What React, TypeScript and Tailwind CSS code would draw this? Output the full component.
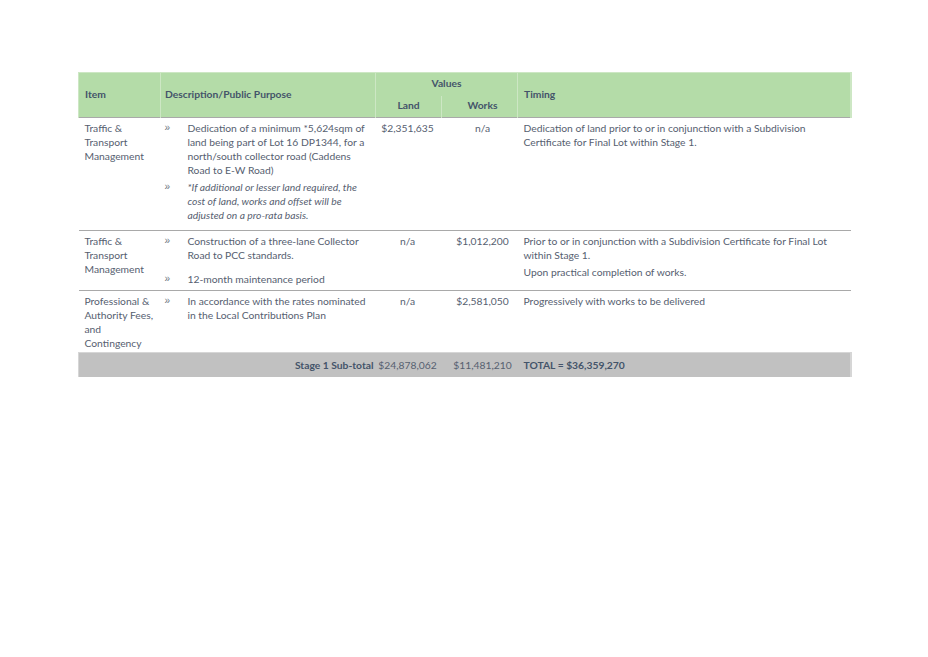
import React from "react";

const Bullet = ({ children, italic = false, className = "" }: { children: React.ReactNode; italic?: boolean; className?: string }) => (
  <div className={`flex ${className}`}>
    <span className="w-[23px] shrink-0 text-[10px] text-[#6b7380]" style={{ fontFamily: "'Liberation Sans', sans-serif" }}>»</span>
    <span className={italic ? "italic" : ""}>{children}</span>
  </div>
);

export default function App() {
  return (
    <div className="min-h-[657px] w-[928px] bg-white pt-[72px] pl-[78px]" style={{ fontFamily: "Lato, 'Liberation Sans', sans-serif" }}>
      <table className="w-[772px] table-fixed border-collapse text-[10.3px] leading-[14px] text-[#566070]">
        <colgroup>
          <col className="w-[82px]" />
          <col className="w-[215px]" />
          <col className="w-[66px]" />
          <col className="w-[76px]" />
          <col className="w-[333px]" />
        </colgroup>
        <thead className="font-bold text-[#44546a]">
          <tr className="h-[23px] bg-[#b4dca8]">
            <th rowSpan={2} className="border-t border-l border-[#cde7c4] pb-[3px] pl-[6px] text-left align-middle font-bold">Item</th>
            <th rowSpan={2} className="border-t border-l border-[#cde7c4] pb-[3px] pl-[4px] text-left align-middle font-bold">Description/Public Purpose</th>
            <th colSpan={2} className="border-t border-l border-[#cde7c4] pb-[2px] text-center align-middle font-bold">Values</th>
            <th rowSpan={2} className="border-t border-l border-r-2 border-[#cde7c4] pb-[3px] pl-[6px] text-left align-middle font-bold">Timing</th>
          </tr>
          <tr className="h-[22px] border-b border-[#a9a9a9] bg-[#b4dca8]">
            <th className="border-l border-[#cde7c4] pb-[2px] text-center font-bold">Land</th>
            <th className="border-l border-[#cde7c4] pb-[2px] pl-[6px] text-center font-bold">Works</th>
          </tr>
        </thead>
        <tbody>
          <tr className="h-[113px] border-b border-[#a9a9a9] align-top">
            <td className="pl-[6px] pt-[3px]">Traffic &amp; Transport Management</td>
            <td className="pt-[3px]" style={{ paddingLeft: 4 }}>
              <Bullet>Dedication of a minimum *5,624sqm of land being part of Lot 16 DP1344, for a north/south collector road (Caddens Road to E-W Road)</Bullet>
              <Bullet italic className="mt-[3px]">*If additional or lesser land required, the cost of land, works and offset will be adjusted on a pro-rata basis.</Bullet>
            </td>
            <td className="pt-[3px] pr-[2px] text-center">$2,351,635</td>
            <td className="pt-[3px] pl-[6px] text-center">n/a</td>
            <td className="pl-[6px] pr-[10px] pt-[3px]">Dedication of land prior to or in conjunction with a Subdivision Certificate for Final Lot within Stage 1.</td>
          </tr>
          <tr className="h-[60px] border-b border-[#a9a9a9] align-top">
            <td className="pl-[6px] pt-[3px]">Traffic &amp; Transport Management</td>
            <td className="pt-[3px]" style={{ paddingLeft: 4 }}>
              <Bullet>Construction of a three-lane Collector Road to PCC standards.</Bullet>
              <Bullet className="mt-[10px]">12-month maintenance period</Bullet>
            </td>
            <td className="pt-[3px] pr-[2px] text-center">n/a</td>
            <td className="pt-[3px] pl-[6px] text-center">$1,012,200</td>
            <td className="pl-[6px] pr-[10px] pt-[3px]">
              <div>Prior to or in conjunction with a Subdivision Certificate for Final Lot within Stage 1.</div>
              <div className="mt-[3px]">Upon practical completion of works.</div>
            </td>
          </tr>
          <tr className="h-[62px] align-top">
            <td className="pl-[6px] pr-[4px] pt-[3px]">Professional &amp; Authority Fees, and Contingency</td>
            <td className="pt-[3px]" style={{ paddingLeft: 4 }}>
              <Bullet>In accordance with the rates nominated in the Local Contributions Plan</Bullet>
            </td>
            <td className="pt-[3px] pr-[2px] text-center">n/a</td>
            <td className="pt-[3px] pl-[6px] text-center">$2,581,050</td>
            <td className="pl-[6px] pr-[10px] pt-[3px]">Progressively with works to be delivered</td>
          </tr>
          <tr className="h-[24px] bg-[#c1c1c1] align-middle">
            <td colSpan={2} className="border-l border-t border-[#d6d6d6] pr-[2px] text-right font-bold text-[#44546a]">Stage 1 Sub-total</td>
            <td className="border-t border-[#d6d6d6] pr-[2px] text-center">$24,878,062</td>
            <td className="border-t border-[#d6d6d6] pl-[6px] text-center">$11,481,210</td>
            <td className="border-t border-r-2 border-[#d6d6d6] pl-[6px] font-bold text-[#44546a]">TOTAL = $36,359,270</td>
          </tr>
        </tbody>
      </table>
    </div>
  );
}
